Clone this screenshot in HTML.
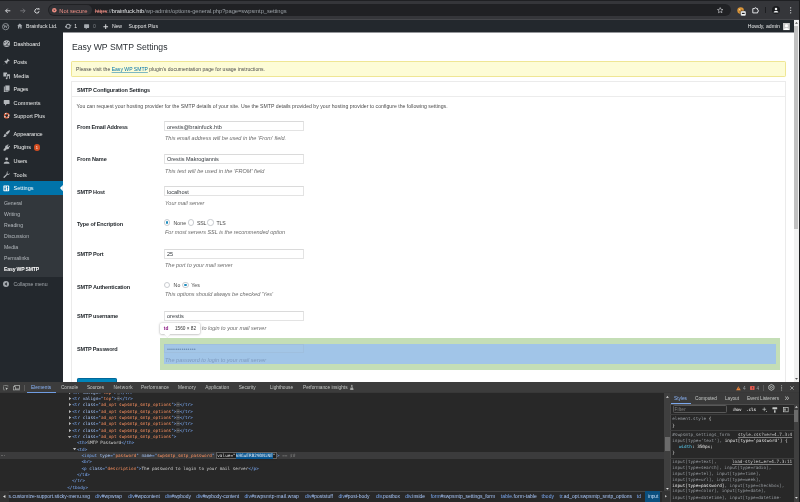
<!DOCTYPE html>
<html lang="en"><head><meta charset="utf-8"><title>Easy WP SMTP Settings</title>
<style>
html,body{margin:0;padding:0;}
body{width:800px;height:502px;overflow:hidden;position:relative;background:#fff;font-family:"Liberation Sans",sans-serif;}
#root{position:absolute;left:0;top:0;width:800px;height:502px;overflow:hidden;will-change:transform;}
.a{position:absolute;}
.t{white-space:pre;line-height:normal;}
.m{font-family:"DejaVu Sans Mono","Liberation Mono",monospace;}
svg{overflow:visible;display:block}
</style></head>
<body>
<div id="root">
<div class="a" style="left:0.00px;top:0.00px;width:800.00px;height:502.00px;background:#ffffff;"></div>
<div class="a" style="left:0.00px;top:0.00px;width:800.00px;height:20.00px;background:#35363a;"></div>
<div class="a" style="left:0.00px;top:0.00px;width:800.00px;height:1.40px;background:#1f2023;"></div>
<div class="a" style="left:0.00px;top:19.20px;width:800.00px;height:0.80px;background:#46474b;"></div>
<svg class="a" style="left:5.20px;top:7.70px;" width="5.6" height="5.6" viewBox="0 0 10 10"><path d="M9.5 5H1.2M4.8 1.2L1 5l3.8 3.8" fill="none" stroke="#e8eaed" stroke-width="1.5"/></svg>
<svg class="a" style="left:19.70px;top:7.70px;" width="5.6" height="5.6" viewBox="0 0 10 10"><path d="M0.5 5H8.8M5.2 1.2L9 5L5.2 8.8" fill="none" stroke="#7d7e82" stroke-width="1.5"/></svg>
<svg class="a" style="left:33.60px;top:7.60px;" width="5.8" height="5.8" viewBox="0 0 10 10"><path d="M8.7 5.4A3.7 3.7 0 1 1 7.2 2.1" fill="none" stroke="#e8eaed" stroke-width="1.5"/><path d="M5.9 0.6H9.3V4Z" fill="#e8eaed"/></svg>
<div class="a" style="left:47.50px;top:3.70px;width:683.00px;height:12.80px;background:#202124;border-radius:6.4px;"></div>
<div class="a" style="left:49.20px;top:5.30px;width:42.80px;height:9.80px;background:#303135;border-radius:4.9px;"></div>
<svg class="a" style="left:51.90px;top:8.00px;" width="4.6" height="4.6" viewBox="0 0 10 10"><circle cx="5" cy="5" r="5" fill="#e98b80"/><path d="M2.6 3.6L5 6.8L7.4 3.6Z" fill="#303135"/></svg>
<div class="a t" style="letter-spacing:0.027px;left:59.20px;top:8px;font-size:5.8px;color:#f08f85;">Not secure</div>
<div class="a t" style="letter-spacing:-0.057px;left:94.80px;top:8px;font-size:5.8px;color:#9aa0a6;"><span style="color:#f08f85;text-decoration:line-through;text-decoration-color:rgba(240,143,133,.5)">https</span><span style="color:#9aa0a6">://</span><span style="color:#e8eaed">brainfuck.htb</span><span style="color:#9aa0a6">/wp-admin/options-general.php?page=swpsmtp_settings</span></div>
<svg class="a" style="left:717.30px;top:6.80px;" width="6.4" height="6.4" viewBox="0 0 10 10"><path d="M5 0.9L6.25 3.7L9.3 4L7 6L7.7 9L5 7.4L2.3 9L3 6L0.7 4L3.75 3.7Z" fill="none" stroke="#d5d7da" stroke-width="0.95" stroke-linejoin="round"/></svg>
<svg class="a" style="left:737.20px;top:6.60px;" width="9.4" height="9.0" viewBox="0 0 9.4 9"><circle cx="3.6" cy="3.6" r="3.3" fill="#d9953a"/><circle cx="2.6" cy="2.6" r="0.7" fill="#f6d9a0"/><circle cx="4.6" cy="3.2" r="0.6" fill="#8a5a1c"/><circle cx="2.8" cy="4.8" r="0.6" fill="#8a5a1c"/><rect x="3.6" y="3.9" width="5.4" height="5" rx="1.1" fill="#f1f3f4" stroke="#35363a" stroke-width="0.5"/><rect x="4.9" y="5.8" width="2.8" height="1.2" fill="#202124"/></svg>
<svg class="a" style="left:751.80px;top:6.90px;" width="7" height="6.6" viewBox="0 0 7 6.6"><path d="M0.8 1.6H2.6A0.9 0.9 0 0 1 4.4 1.6H5.6V3A0.9 0.9 0 0 1 5.6 4.8V5.9H0.8Z" fill="none" stroke="#e8eaed" stroke-width="0.95" stroke-linejoin="round"/></svg>
<div class="a" style="left:765.10px;top:7.40px;width:0.60px;height:5.80px;background:#1d1e21;"></div>
<svg class="a" style="left:772.00px;top:6.00px;" width="8" height="8" viewBox="0 0 8 8"><circle cx="4" cy="4" r="4" fill="#1b1c1f"/><circle cx="4" cy="2.9" r="1.25" fill="#f1f3f4"/><path d="M1.7 6.1C1.7 4.6 6.3 4.6 6.3 6.1V6.5H1.7Z" fill="#f1f3f4"/></svg>
<svg class="a" style="left:789.80px;top:6.70px;" width="1.4" height="6.6" viewBox="0 0 1.4 6.6"><circle cx="0.7" cy="0.8" r="0.62" fill="#e8eaed"/><circle cx="0.7" cy="3.3" r="0.62" fill="#e8eaed"/><circle cx="0.7" cy="5.8" r="0.62" fill="#e8eaed"/></svg>
<div class="a" style="left:0.00px;top:20.00px;width:793.60px;height:12.40px;background:#23282d;"></div>
<svg class="a" style="left:2.20px;top:22.50px;" width="7.3" height="7.3" viewBox="0 0 10 10"><circle cx="5" cy="5" r="4.3" fill="none" stroke="#a6abb0" stroke-width="1"/><text x="5" y="7.3" font-size="6.4" font-weight="700" text-anchor="middle" fill="#a6abb0" font-family="Liberation Serif,serif">W</text></svg>
<svg class="a" style="left:16.90px;top:23.40px;" width="5.6" height="5.8" viewBox="0 0 10 10"><path d="M5 0.5L9.6 4.6H8.3V9.5H5.9V6.3H4.1V9.5H1.7V4.6H0.4Z" fill="#a6abb0"/></svg>
<div class="a t" style="letter-spacing:0.004px;left:26.00px;top:23px;font-size:5.15px;color:#e6e7e8;">Brainfuck Ltd.</div>
<svg class="a" style="left:64.50px;top:23.20px;" width="6.4" height="6.4" viewBox="0 0 10 10"><circle cx="5" cy="5" r="3.2" fill="none" stroke="#a6abb0" stroke-width="1.6"/><path d="M9.8 2.2V5.2H6.8Z" fill="#a6abb0"/><path d="M0.2 7.8V4.8H3.2Z" fill="#a6abb0"/><path d="M7.2 5.4L9.6 5.4L9.6 6.2Z" fill="#23282d"/><path d="M2.8 4.6L0.4 4.6L0.4 3.8Z" fill="#23282d"/></svg>
<div class="a t" style="left:74.20px;top:23px;font-size:5.15px;color:#e6e7e8;">1</div>
<svg class="a" style="left:83.50px;top:23.70px;" width="5.2" height="5.9" viewBox="0 0 10 11"><path d="M1.2 0.5H8.8A1 1 0 0 1 9.8 1.5V6.5A1 1 0 0 1 8.8 7.5H6L3.4 10.5V7.5H1.2A1 1 0 0 1 0.2 6.5V1.5A1 1 0 0 1 1.2 0.5Z" fill="#a6abb0"/></svg>
<div class="a t" style="left:93.00px;top:23px;font-size:5.15px;color:#7c8186;">0</div>
<svg class="a" style="left:103.30px;top:23.60px;" width="5.4" height="5.4" viewBox="0 0 10 10"><path d="M5 0.6V9.4M0.6 5H9.4" stroke="#d6d8da" stroke-width="1.9" fill="none"/></svg>
<div class="a t" style="letter-spacing:-0.099px;left:112.00px;top:23px;font-size:5.15px;color:#e6e7e8;">New</div>
<div class="a t" style="letter-spacing:0.005px;left:128.50px;top:23px;font-size:5.15px;color:#e6e7e8;">Support Plus</div>
<div class="a t" style="letter-spacing:0.008px;left:747.70px;top:23px;font-size:5.15px;color:#e6e7e8;">Howdy, admin</div>
<svg class="a" style="left:783.10px;top:22.60px;" width="6.9" height="7.1" viewBox="0 0 6.9 7.1"><rect width="6.9" height="7.1" fill="#c9c9c9"/><circle cx="3.45" cy="2.7" r="1.5" fill="#fff"/><path d="M0.8 7.1C0.8 4.2 6.1 4.2 6.1 7.1Z" fill="#fff"/></svg>
<div class="a" style="left:0.00px;top:32.40px;width:63.00px;height:350.00px;background:#23282d;"></div>
<div class="a" style="left:63.00px;top:32.00px;width:730.60px;height:1.00px;background:#94969a;"></div>
<svg class="a" style="left:2.55px;top:40.45px;" width="7.3" height="7.3" viewBox="0 0 10 10"><circle cx="5" cy="5" r="4.5" fill="#b3b7bb"/><circle cx="5" cy="2.3" r="0.7" fill="#23282d"/><circle cx="2.5" cy="3.6" r="0.7" fill="#23282d"/><circle cx="7.5" cy="3.6" r="0.7" fill="#23282d"/><path d="M4.2 6.9L6.7 3.6L5.9 7.4Z" fill="#23282d"/><path d="M1.2 7.6H8.8" stroke="#23282d" stroke-width="0.6"/></svg>
<div class="a t" style="letter-spacing:-0.071px;left:13.60px;top:41px;font-size:5.55px;color:#ebecec;">Dashboard</div>
<svg class="a" style="left:2.55px;top:58.45px;" width="7.3" height="7.3" viewBox="0 0 10 10"><path d="M6 0.6L9.4 4L8.3 4.5L7.6 4.2L6 5.8C6.3 6.8 6 7.7 5.4 8.3L3.6 6.5L0.9 9.4L0.6 9.1L3.5 6.4L1.7 4.6C2.3 4 3.2 3.7 4.2 4L5.8 2.4L5.5 1.7Z" fill="#b3b7bb"/></svg>
<div class="a t" style="letter-spacing:-0.095px;left:13.60px;top:59px;font-size:5.55px;color:#ebecec;">Posts</div>
<svg class="a" style="left:2.55px;top:71.95px;" width="7.3" height="7.3" viewBox="0 0 10 10"><path d="M0.5 0.8H5.6V2.6H4.2V6.2H0.5Z" fill="#b3b7bb"/><path d="M5 3.2H9.5V9.2H8.3V5.4L6.2 5.9V8.7A1.2 1.1 0 1 1 5 7.7Z" fill="#b3b7bb"/></svg>
<div class="a t" style="letter-spacing:0.018px;left:13.60px;top:73px;font-size:5.55px;color:#ebecec;">Media</div>
<svg class="a" style="left:2.55px;top:85.45px;" width="7.3" height="7.3" viewBox="0 0 10 10"><path d="M3.2 0.6H9V7.8H3.2Z" fill="#b3b7bb"/><path d="M1.2 2.2H2.5V8.5H7.4V9.6H1.2Z" fill="#b3b7bb"/></svg>
<div class="a t" style="letter-spacing:-0.247px;left:13.60px;top:86px;font-size:5.55px;color:#ebecec;">Pages</div>
<svg class="a" style="left:2.55px;top:99.05px;" width="7.3" height="7.3" viewBox="0 0 10 10"><path d="M2 1.2H8A1 1 0 0 1 9 2.2V6A1 1 0 0 1 8 7H5.2L2.8 9.4V7H2A1 1 0 0 1 1 6V2.2A1 1 0 0 1 2 1.2Z" fill="#b3b7bb"/></svg>
<div class="a t" style="letter-spacing:0.034px;left:13.60px;top:100px;font-size:5.55px;color:#ebecec;">Comments</div>
<svg class="a" style="left:2.55px;top:112.35px;" width="7.3" height="7.3" viewBox="0 0 10 10"><circle cx="5" cy="5" r="2.9" fill="none" stroke="#dc5f38" stroke-width="1.9"/><circle cx="5" cy="5" r="2.9" fill="none" stroke="#ececec" stroke-width="1.9" stroke-dasharray="1.5 3.055" transform="rotate(29 5 5)"/></svg>
<div class="a t" style="letter-spacing:-0.030px;left:13.60px;top:113px;font-size:5.55px;color:#ebecec;">Support Plus</div>
<svg class="a" style="left:2.55px;top:130.25px;" width="7.3" height="7.3" viewBox="0 0 10 10"><path d="M9.7 0.5C7.6 0.7 4.8 2.6 3.5 4.6L5.5 6.6C7.5 5.2 9.4 2.6 9.7 0.5Z" fill="#b3b7bb"/><path d="M2.9 5.2L4.9 7.2C4.8 8.8 3 9.8 0.3 9.6C1.6 8.4 1.2 6 2.9 5.2Z" fill="#b3b7bb"/></svg>
<div class="a t" style="letter-spacing:-0.092px;left:13.60px;top:131px;font-size:5.55px;color:#ebecec;">Appearance</div>
<svg class="a" style="left:2.55px;top:143.85px;" width="7.3" height="7.3" viewBox="0 0 10 10"><path d="M6.9 0.5L7.7 1.3L6 3L7.2 4.2L8.9 2.5L9.7 3.3L8 5L8.6 5.6C7.6 7.2 6.4 7.6 5 7.2L3 9.4H0.8V7.2L3 5.2C2.6 3.8 3 2.6 4.6 1.6L5.2 2.2Z" fill="#b3b7bb"/></svg>
<div class="a t" style="letter-spacing:-0.115px;left:13.60px;top:144px;font-size:5.55px;color:#ebecec;">Plugins</div>
<svg class="a" style="left:2.55px;top:157.35px;" width="7.3" height="7.3" viewBox="0 0 10 10"><circle cx="5" cy="2.6" r="2" fill="#b3b7bb"/><path d="M1 9.2C1 5 9 5 9 9.2Z" fill="#b3b7bb"/></svg>
<div class="a t" style="letter-spacing:-0.180px;left:13.60px;top:158px;font-size:5.55px;color:#ebecec;">Users</div>
<svg class="a" style="left:2.55px;top:170.95px;" width="7.3" height="7.3" viewBox="0 0 10 10"><path d="M9.5 2.6A2.6 2.6 0 0 1 6 5L2.2 9.2A1 1 0 0 1 0.8 7.8L5 4A2.6 2.6 0 0 1 7.4 0.5L5.9 2L6.4 3.6L8 4.1Z" fill="#b3b7bb"/></svg>
<div class="a t" style="letter-spacing:0.069px;left:13.60px;top:172px;font-size:5.55px;color:#ebecec;">Tools</div>
<div class="a" style="left:33.60px;top:144.30px;width:6.40px;height:6.40px;background:#d54e21;border-radius:3.2px;"></div>
<div class="a t" style="left:35.75px;top:145px;font-size:4.0px;color:#fff;">1</div>
<div class="a" style="left:0.00px;top:181.20px;width:63.00px;height:13.50px;background:#0073aa;"></div>
<svg class="a" style="left:2.90px;top:184.60px;" width="6.6" height="6.6" viewBox="0 0 10 10"><rect x="0.6" y="0.6" width="8.8" height="8.8" rx="1" fill="#fff"/><path d="M3.2 1.6V8.4M6.8 1.6V8.4" stroke="#0073aa" stroke-width="1.1"/><rect x="2.2" y="5" width="2" height="1.8" fill="#0073aa"/><rect x="5.8" y="2.8" width="2" height="1.8" fill="#0073aa"/></svg>
<div class="a t" style="letter-spacing:-0.018px;left:13.60px;top:185px;font-size:5.55px;color:#fff;">Settings</div>
<svg class="a" style="left:60.10px;top:184.90px;" width="2.9" height="6.2" viewBox="0 0 2.9 6.2"><path d="M2.9 0V6.2L0 3.1Z" fill="#fff"/></svg>
<div class="a" style="left:0.00px;top:194.70px;width:63.00px;height:82.70px;background:#32373c;"></div>
<div class="a t" style="letter-spacing:-0.057px;left:4.10px;top:200px;font-size:5.15px;color:#b4b9be;">General</div>
<div class="a t" style="letter-spacing:0.013px;left:4.10px;top:211px;font-size:5.15px;color:#b4b9be;">Writing</div>
<div class="a t" style="letter-spacing:-0.037px;left:4.10px;top:222px;font-size:5.15px;color:#b4b9be;">Reading</div>
<div class="a t" style="letter-spacing:0.004px;left:4.10px;top:233px;font-size:5.15px;color:#b4b9be;">Discussion</div>
<div class="a t" style="letter-spacing:-0.023px;left:4.10px;top:244px;font-size:5.15px;color:#b4b9be;">Media</div>
<div class="a t" style="letter-spacing:-0.014px;left:4.10px;top:255px;font-size:5.15px;color:#b4b9be;">Permalinks</div>
<div class="a t" style="letter-spacing:-0.204px;left:4.10px;top:266px;font-size:5.15px;color:#fff;font-weight:700;">Easy WP SMTP</div>
<svg class="a" style="left:3.20px;top:281.20px;" width="6" height="6" viewBox="0 0 10 10"><circle cx="5" cy="5" r="5" fill="#a3a8ad"/><path d="M6.4 2.2V7.8L2.6 5Z" fill="#23282d"/></svg>
<div class="a t" style="letter-spacing:-0.031px;left:13.60px;top:281px;font-size:5.15px;color:#a3a8ad;">Collapse menu</div>
<div class="a t" style="transform:scaleX(0.9031);transform-origin:0 0;left:71.60px;top:41px;font-size:9.6px;color:#2b3035;">Easy WP SMTP Settings</div>
<div class="a" style="left:71.00px;top:61.25px;width:715.00px;height:15.30px;background:#fdfcd6;border:0.5px solid #efe694;border-radius:1.2px;box-sizing:border-box;"></div>
<div class="a t" style="letter-spacing:0.017px;left:76.00px;top:66px;font-size:5.05px;color:#4a4a4a;">Please visit the <span style="color:#0073aa;text-decoration:underline;text-decoration-color:rgba(0,115,170,.5);text-underline-offset:0.5px">Easy WP SMTP</span> plugin's documentation page for usage instructions.</div>
<div class="a" style="left:71.20px;top:81.20px;width:714.40px;height:320.00px;background:#ffffff;border:1px solid #ebebeb;box-sizing:border-box;"></div>
<div class="a t" style="letter-spacing:-0.131px;left:76.90px;top:87px;font-size:5.55px;color:#23282d;font-weight:700;">SMTP Configuration Settings</div>
<div class="a" style="left:71.50px;top:96.10px;width:713.80px;height:0.45px;background:#ececec;"></div>
<div class="a t" style="letter-spacing:0.008px;left:76.60px;top:103px;font-size:5.15px;color:#4a4a4a;">You can request your hosting provider for the SMTP details of your site. Use the SMTP details provided by your hosting provider to configure the following settings.</div>
<div class="a t" style="letter-spacing:-0.167px;left:77.00px;top:124px;font-size:5.55px;color:#23282d;font-weight:700;">From Email Address</div>
<div class="a t" style="letter-spacing:-0.092px;left:77.00px;top:156px;font-size:5.55px;color:#23282d;font-weight:700;">From Name</div>
<div class="a t" style="letter-spacing:-0.160px;left:77.00px;top:189px;font-size:5.55px;color:#23282d;font-weight:700;">SMTP Host</div>
<div class="a t" style="letter-spacing:-0.132px;left:77.00px;top:221px;font-size:5.55px;color:#23282d;font-weight:700;">Type of Encription</div>
<div class="a t" style="letter-spacing:-0.161px;left:77.00px;top:251px;font-size:5.55px;color:#23282d;font-weight:700;">SMTP Port</div>
<div class="a t" style="letter-spacing:-0.130px;left:77.00px;top:284px;font-size:5.55px;color:#23282d;font-weight:700;">SMTP Authentication</div>
<div class="a t" style="letter-spacing:-0.166px;left:77.00px;top:313px;font-size:5.55px;color:#23282d;font-weight:700;">SMTP username</div>
<div class="a t" style="letter-spacing:-0.197px;left:77.00px;top:346px;font-size:5.55px;color:#23282d;font-weight:700;">SMTP Password</div>
<div class="a" style="left:164.00px;top:121.25px;width:139.70px;height:9.70px;background:#fff;border:1px solid #e3e3e3;border-top-color:#dadada;box-sizing:border-box;"></div>
<div class="a t" style="letter-spacing:0.060px;left:166.90px;top:124px;font-size:5.55px;color:#32373c;">orestis@brainfuck.htb</div>
<div class="a" style="left:164.00px;top:154.00px;width:139.70px;height:9.70px;background:#fff;border:1px solid #e3e3e3;border-top-color:#dadada;box-sizing:border-box;"></div>
<div class="a t" style="letter-spacing:-0.005px;left:166.90px;top:156px;font-size:5.55px;color:#32373c;">Orestis Makrogiannis</div>
<div class="a" style="left:164.00px;top:186.40px;width:139.70px;height:9.70px;background:#fff;border:1px solid #e3e3e3;border-top-color:#dadada;box-sizing:border-box;"></div>
<div class="a t" style="letter-spacing:0.010px;left:166.90px;top:189px;font-size:5.55px;color:#32373c;">localhost</div>
<div class="a" style="left:164.00px;top:249.00px;width:139.70px;height:9.70px;background:#fff;border:1px solid #e3e3e3;border-top-color:#dadada;box-sizing:border-box;"></div>
<div class="a t" style="letter-spacing:-0.086px;left:166.90px;top:251px;font-size:5.55px;color:#32373c;">25</div>
<div class="a" style="left:164.00px;top:311.00px;width:139.70px;height:9.70px;background:#fff;border:1px solid #e3e3e3;border-top-color:#dadada;box-sizing:border-box;"></div>
<div class="a t" style="letter-spacing:0.094px;left:166.90px;top:313px;font-size:5.55px;color:#32373c;">orestis</div>
<div class="a t" style="letter-spacing:-0.000px;left:165.00px;top:135px;font-size:5.5px;color:#6a6a6a;font-style:italic;">This email address will be used in the 'From' field.</div>
<div class="a t" style="letter-spacing:0.046px;left:165.00px;top:168px;font-size:5.5px;color:#6a6a6a;font-style:italic;">This text will be used in the 'FROM' field</div>
<div class="a t" style="letter-spacing:-0.022px;left:165.00px;top:200px;font-size:5.5px;color:#6a6a6a;font-style:italic;">Your mail server</div>
<div class="a t" style="letter-spacing:-0.021px;left:165.00px;top:229px;font-size:5.5px;color:#6a6a6a;font-style:italic;">For most servers SSL is the recommended option</div>
<div class="a t" style="letter-spacing:0.009px;left:165.00px;top:262px;font-size:5.5px;color:#6a6a6a;font-style:italic;">The port to your mail server</div>
<div class="a t" style="letter-spacing:-0.005px;left:165.00px;top:291px;font-size:5.5px;color:#6a6a6a;font-style:italic;">This options should always be checked 'Yes'</div>
<div class="a t" style="letter-spacing:-0.007px;left:165.00px;top:325px;font-size:5.5px;color:#6a6a6a;font-style:italic;">The username to login to your mail server</div>
<div class="a" style="left:164.10px;top:219.45px;width:6.30px;height:6.30px;background:#fff;border:1px solid #c9ccd0;border-radius:50%;box-sizing:border-box;"></div>
<div class="a" style="left:166.05px;top:221.40px;width:2.40px;height:2.40px;background:#1e8cbe;border-radius:50%;"></div>
<div class="a" style="left:188.10px;top:219.45px;width:6.30px;height:6.30px;background:#fff;border:1px solid #c9ccd0;border-radius:50%;box-sizing:border-box;"></div>
<div class="a" style="left:207.45px;top:219.45px;width:6.30px;height:6.30px;background:#fff;border:1px solid #c9ccd0;border-radius:50%;box-sizing:border-box;"></div>
<div class="a t" style="letter-spacing:0.113px;left:173.50px;top:220px;font-size:5.15px;color:#444;">None</div>
<div class="a t" style="letter-spacing:-0.273px;left:197.10px;top:220px;font-size:5.15px;color:#444;">SSL</div>
<div class="a t" style="letter-spacing:-0.113px;left:216.50px;top:220px;font-size:5.15px;color:#444;">TLS</div>
<div class="a" style="left:164.10px;top:281.85px;width:6.30px;height:6.30px;background:#fff;border:1px solid #c9ccd0;border-radius:50%;box-sizing:border-box;"></div>
<div class="a" style="left:182.25px;top:281.85px;width:6.30px;height:6.30px;background:#fff;border:1px solid #c9ccd0;border-radius:50%;box-sizing:border-box;"></div>
<div class="a" style="left:184.20px;top:283.80px;width:2.40px;height:2.40px;background:#1e8cbe;border-radius:50%;"></div>
<div class="a t" style="letter-spacing:0.261px;left:173.50px;top:282px;font-size:5.15px;color:#444;">No</div>
<div class="a t" style="letter-spacing:0.036px;left:191.25px;top:282px;font-size:5.15px;color:#444;">Yes</div>
<div class="a" style="left:160.00px;top:337.50px;width:620.00px;height:32.30px;background:#c4deb6;"></div>
<div class="a" style="left:164.00px;top:343.50px;width:612.00px;height:20.20px;background:#a1c5e8;"></div>
<div class="a" style="left:164.00px;top:343.50px;width:139.70px;height:9.40px;background:#a3c6e7;border:0.5px solid #9fbfde;box-sizing:border-box;"></div>
<div class="a t" style="letter-spacing:0.113px;left:166.90px;top:346px;font-size:5.6px;color:#6e8eb4;">••••••••••••••</div>
<div class="a t" style="letter-spacing:0.015px;left:165.00px;top:357px;font-size:5.5px;color:#7e9bbf;font-style:italic;">The password to login to your mail server</div>
<div class="a" style="left:160.00px;top:323.25px;width:39.75px;height:10.90px;background:#fff;border-radius:1.6px;box-shadow:0 0.3px 2.2px rgba(0,0,0,.42);"></div>
<svg class="a" style="left:164.30px;top:333.80px;filter:drop-shadow(0 0.5px 0.5px rgba(0,0,0,.22));" width="6.4" height="3.8" viewBox="0 0 6.4 3.8"><path d="M0 0H6.4L3.2 3.7Z" fill="#fff"/></svg>
<div class="a" style="left:163.00px;top:331.00px;width:10.00px;height:3.10px;background:#fff;"></div>
<div class="a t" style="letter-spacing:0.258px;left:163.75px;top:326px;font-size:4.75px;color:#881280;font-weight:700;">td</div>
<div class="a t" style="letter-spacing:-0.030px;left:175.00px;top:326px;font-size:4.75px;color:#333;">1560 × 82</div>
<div class="a" style="left:76.90px;top:377.90px;width:40.20px;height:10.00px;background:#0085ba;border-radius:1.2px;border:0.4px solid #006799;box-sizing:border-box;"></div>
<div class="a t" style="left:81.00px;top:381px;font-size:5.15px;color:#fff;">Save Changes</div>
<div class="a" style="left:793.60px;top:20.00px;width:5.00px;height:362.20px;background:#f1f1f1;"></div>
<div class="a" style="left:794.10px;top:26.00px;width:4.10px;height:202.70px;background:#c1c1c1;"></div>
<svg class="a" style="left:794.60px;top:21.80px;" width="3" height="1.8" viewBox="0 0 3 1.8"><path d="M0 1.8L1.5 0L3 1.8Z" fill="#505050"/></svg>
<svg class="a" style="left:794.60px;top:378.00px;" width="3" height="1.8" viewBox="0 0 3 1.8"><path d="M0 0L1.5 1.8L3 0Z" fill="#505050"/></svg>
<div class="a" style="left:0.00px;top:382.20px;width:800.00px;height:119.80px;background:#282828;"></div>
<div class="a" style="left:0.00px;top:452.10px;width:670.20px;height:6.60px;background:#3b3b3c;"></div>
<div class="a t" style="left:0.40px;top:452px;font-size:4.6px;color:#dcdcdc;">…</div>
<div class="a t m" style="left:72.20px;top:390px;font-size:4.33px;color:#d0d0d0;"><span style="color:#7cacf8">&lt;tr</span> <span style="color:#a8c7fa">valign</span><span style="color:#7cacf8">="</span><span style="color:#fb915f">top</span><span style="color:#7cacf8">"</span><span style="color:#7cacf8">&gt;</span><span style="color:#c8c8c8;background:#454648;border-radius:1.6px;font-size:3.8px;padding:0 0.5px;">&#8943;</span><span style="color:#7cacf8">&lt;/tr&gt;</span></div>
<svg class="a" style="left:69.10px;top:390.67px;" width="2.2" height="3.2" viewBox="0 0 2.2 3.2"><path d="M0 0L2.2 1.6L0 3.2Z" fill="#bdbdbd"/></svg>
<svg class="a" style="left:69.10px;top:397.00px;" width="2.2" height="3.2" viewBox="0 0 2.2 3.2"><path d="M0 0L2.2 1.6L0 3.2Z" fill="#bdbdbd"/></svg>
<div class="a t m" style="left:72.20px;top:396px;font-size:4.33px;color:#d0d0d0;"><span style="color:#7cacf8">&lt;tr</span> <span style="color:#a8c7fa">valign</span><span style="color:#7cacf8">="</span><span style="color:#fb915f">top</span><span style="color:#7cacf8">"</span><span style="color:#7cacf8">&gt;</span><span style="color:#c8c8c8;background:#454648;border-radius:1.6px;font-size:3.8px;padding:0 0.5px;">&#8943;</span><span style="color:#7cacf8">&lt;/tr&gt;</span></div>
<svg class="a" style="left:69.10px;top:403.33px;" width="2.2" height="3.2" viewBox="0 0 2.2 3.2"><path d="M0 0L2.2 1.6L0 3.2Z" fill="#bdbdbd"/></svg>
<div class="a t m" style="left:72.20px;top:402px;font-size:4.33px;color:#d0d0d0;"><span style="color:#7cacf8">&lt;tr</span> <span style="color:#a8c7fa">class</span><span style="color:#7cacf8">="</span><span style="color:#fb915f">ad_opt swpsmtp_smtp_options</span><span style="color:#7cacf8">"</span><span style="color:#7cacf8">&gt;</span><span style="color:#c8c8c8;background:#454648;border-radius:1.6px;font-size:3.8px;padding:0 0.5px;">&#8943;</span><span style="color:#7cacf8">&lt;/tr&gt;</span></div>
<svg class="a" style="left:69.10px;top:409.66px;" width="2.2" height="3.2" viewBox="0 0 2.2 3.2"><path d="M0 0L2.2 1.6L0 3.2Z" fill="#bdbdbd"/></svg>
<div class="a t m" style="left:72.20px;top:409px;font-size:4.33px;color:#d0d0d0;"><span style="color:#7cacf8">&lt;tr</span> <span style="color:#a8c7fa">class</span><span style="color:#7cacf8">="</span><span style="color:#fb915f">ad_opt swpsmtp_smtp_options</span><span style="color:#7cacf8">"</span><span style="color:#7cacf8">&gt;</span><span style="color:#c8c8c8;background:#454648;border-radius:1.6px;font-size:3.8px;padding:0 0.5px;">&#8943;</span><span style="color:#7cacf8">&lt;/tr&gt;</span></div>
<svg class="a" style="left:69.10px;top:415.99px;" width="2.2" height="3.2" viewBox="0 0 2.2 3.2"><path d="M0 0L2.2 1.6L0 3.2Z" fill="#bdbdbd"/></svg>
<div class="a t m" style="left:72.20px;top:415px;font-size:4.33px;color:#d0d0d0;"><span style="color:#7cacf8">&lt;tr</span> <span style="color:#a8c7fa">class</span><span style="color:#7cacf8">="</span><span style="color:#fb915f">ad_opt swpsmtp_smtp_options</span><span style="color:#7cacf8">"</span><span style="color:#7cacf8">&gt;</span><span style="color:#c8c8c8;background:#454648;border-radius:1.6px;font-size:3.8px;padding:0 0.5px;">&#8943;</span><span style="color:#7cacf8">&lt;/tr&gt;</span></div>
<svg class="a" style="left:69.10px;top:422.32px;" width="2.2" height="3.2" viewBox="0 0 2.2 3.2"><path d="M0 0L2.2 1.6L0 3.2Z" fill="#bdbdbd"/></svg>
<div class="a t m" style="left:72.20px;top:421px;font-size:4.33px;color:#d0d0d0;"><span style="color:#7cacf8">&lt;tr</span> <span style="color:#a8c7fa">class</span><span style="color:#7cacf8">="</span><span style="color:#fb915f">ad_opt swpsmtp_smtp_options</span><span style="color:#7cacf8">"</span><span style="color:#7cacf8">&gt;</span><span style="color:#c8c8c8;background:#454648;border-radius:1.6px;font-size:3.8px;padding:0 0.5px;">&#8943;</span><span style="color:#7cacf8">&lt;/tr&gt;</span></div>
<svg class="a" style="left:69.10px;top:428.65px;" width="2.2" height="3.2" viewBox="0 0 2.2 3.2"><path d="M0 0L2.2 1.6L0 3.2Z" fill="#bdbdbd"/></svg>
<div class="a t m" style="left:72.20px;top:428px;font-size:4.33px;color:#d0d0d0;"><span style="color:#7cacf8">&lt;tr</span> <span style="color:#a8c7fa">class</span><span style="color:#7cacf8">="</span><span style="color:#fb915f">ad_opt swpsmtp_smtp_options</span><span style="color:#7cacf8">"</span><span style="color:#7cacf8">&gt;</span><span style="color:#c8c8c8;background:#454648;border-radius:1.6px;font-size:3.8px;padding:0 0.5px;">&#8943;</span><span style="color:#7cacf8">&lt;/tr&gt;</span></div>
<svg class="a" style="left:68.20px;top:435.58px;" width="3.2" height="2.2" viewBox="0 0 3.2 2.2"><path d="M0 0H3.2L1.6 2.2Z" fill="#bdbdbd"/></svg>
<div class="a t m" style="left:72.20px;top:434px;font-size:4.33px;color:#d0d0d0;"><span style="color:#7cacf8">&lt;tr</span> <span style="color:#a8c7fa">class</span><span style="color:#7cacf8">="</span><span style="color:#fb915f">ad_opt swpsmtp_smtp_options</span><span style="color:#7cacf8">"</span><span style="color:#7cacf8">&gt;</span></div>
<div class="a t m" style="left:76.90px;top:440px;font-size:4.33px;color:#d0d0d0;"><span style="color:#7cacf8">&lt;th&gt;</span>SMTP Password<span style="color:#7cacf8">&lt;/th&gt;</span></div>
<svg class="a" style="left:72.90px;top:448.24px;" width="3.2" height="2.2" viewBox="0 0 3.2 2.2"><path d="M0 0H3.2L1.6 2.2Z" fill="#bdbdbd"/></svg>
<div class="a t m" style="left:76.90px;top:447px;font-size:4.33px;color:#d0d0d0;"><span style="color:#7cacf8">&lt;td&gt;</span></div>
<div class="a t m" style="left:81.50px;top:453px;font-size:4.33px;color:#d0d0d0;"><span style="color:#7cacf8">&lt;input</span> <span style="color:#a8c7fa">type</span><span style="color:#7cacf8">="</span><span style="color:#fb915f">password</span><span style="color:#7cacf8">"</span> <span style="color:#a8c7fa">name</span><span style="color:#7cacf8">="</span><span style="color:#fb915f">swpsmtp_smtp_password</span><span style="color:#7cacf8">"</span></div>
<div class="a" style="left:216.00px;top:451.90px;width:60.50px;height:7.50px;background:#1f1f1f;border:1px solid #626262;box-sizing:border-box;box-shadow:0 0.4px 1.2px rgba(0,0,0,.6);"></div>
<div class="a" style="left:236.10px;top:452.50px;width:36.70px;height:6.20px;background:#0a5792;"></div>
<div class="a t m" style="letter-spacing:0.043px;left:217.20px;top:453px;font-size:4.33px;color:#e0e0e0;">value="<span style="color:#e4ecf5">kHGuERB29DNiNE</span>"</div>
<div class="a t m" style="left:277.00px;top:453px;font-size:4.33px;color:#d0d0d0;"><span style="color:#7cacf8">&gt;</span><span style="color:#7d7d7d"> == </span><span style="color:#7d7d7d;font-style:italic">$0</span></div>
<div class="a t m" style="left:81.50px;top:459px;font-size:4.33px;color:#d0d0d0;"><span style="color:#7cacf8">&lt;br&gt;</span></div>
<div class="a t m" style="left:81.50px;top:466px;font-size:4.33px;color:#d0d0d0;"><span style="color:#7cacf8">&lt;p</span> <span style="color:#a8c7fa">class</span><span style="color:#7cacf8">="</span><span style="color:#fb915f">description</span><span style="color:#7cacf8">"</span><span style="color:#7cacf8">&gt;</span>The password to login to your mail server<span style="color:#7cacf8">&lt;/p&gt;</span></div>
<div class="a t m" style="left:76.90px;top:472px;font-size:4.33px;color:#d0d0d0;"><span style="color:#7cacf8">&lt;/td&gt;</span></div>
<div class="a t m" style="left:72.00px;top:478px;font-size:4.33px;color:#d0d0d0;"><span style="color:#7cacf8">&lt;/tr&gt;</span></div>
<div class="a t m" style="left:67.20px;top:485px;font-size:4.33px;color:#d0d0d0;"><span style="color:#7cacf8">&lt;/tbody&gt;</span></div>
<div class="a" style="left:0.00px;top:382.20px;width:800.00px;height:10.00px;background:#3c3c3c;"></div>
<div class="a" style="left:0.00px;top:392.00px;width:800.00px;height:1.00px;background:#383838;"></div>
<svg class="a" style="left:3.40px;top:384.90px;" width="5.4" height="5.4" viewBox="0 0 10 10"><path d="M4 9H1V1H9V4" fill="none" stroke="#c4c7c5" stroke-width="1.2" stroke-dasharray="1.4 0.9"/><path d="M4.6 4.6L9.6 6.4L7.4 7.4L6.4 9.6Z" fill="#c4c7c5"/></svg>
<svg class="a" style="left:13.00px;top:384.90px;" width="7.2" height="5.4" viewBox="0 0 13 10"><rect x="3" y="1" width="8.6" height="6.4" fill="none" stroke="#c4c7c5" stroke-width="1.2"/><rect x="0.6" y="3.2" width="3.6" height="6" fill="#3c3c3c" stroke="#c4c7c5" stroke-width="1.1"/><path d="M5 9H12.6" stroke="#c4c7c5" stroke-width="1.2"/></svg>
<div class="a" style="left:24.40px;top:384.60px;width:0.45px;height:6.00px;background:#5a5a5a;"></div>
<div class="a t" style="letter-spacing:0.055px;left:31.00px;top:385px;font-size:4.75px;color:#8ab4f8;">Elements</div>
<div class="a t" style="letter-spacing:-0.062px;left:61.00px;top:385px;font-size:4.75px;color:#c4c7c5;">Console</div>
<div class="a t" style="letter-spacing:-0.062px;left:87.00px;top:385px;font-size:4.75px;color:#c4c7c5;">Sources</div>
<div class="a t" style="letter-spacing:0.311px;left:113.40px;top:385px;font-size:4.75px;color:#c4c7c5;">Network</div>
<div class="a t" style="letter-spacing:0.072px;left:141.00px;top:385px;font-size:4.75px;color:#c4c7c5;">Performance</div>
<div class="a t" style="letter-spacing:0.157px;left:177.90px;top:385px;font-size:4.75px;color:#c4c7c5;">Memory</div>
<div class="a t" style="letter-spacing:0.077px;left:205.20px;top:385px;font-size:4.75px;color:#c4c7c5;">Application</div>
<div class="a t" style="letter-spacing:-0.053px;left:238.75px;top:385px;font-size:4.75px;color:#c4c7c5;">Security</div>
<div class="a t" style="letter-spacing:-0.025px;left:270.00px;top:385px;font-size:4.75px;color:#c4c7c5;">Lighthouse</div>
<div class="a t" style="letter-spacing:-0.006px;left:303.00px;top:385px;font-size:4.75px;color:#c4c7c5;">Performance insights</div>
<div class="a" style="left:26.90px;top:392.00px;width:29.00px;height:1.00px;background:#6f9ce2;"></div>
<svg class="a" style="left:350.20px;top:385.20px;" width="3.6" height="4.8" viewBox="0 0 6 8"><path d="M2 0.5H4M2.4 0.5V3L0.6 7.4H5.4L3.6 3V0.5" fill="none" stroke="#c4c7c5" stroke-width="0.9"/><path d="M1.4 5.4H4.6L5.4 7.4H0.6Z" fill="#c4c7c5"/></svg>
<svg class="a" style="left:736.20px;top:385.70px;" width="4.8" height="4.4" viewBox="0 0 10 9"><path d="M5 0.3L9.8 8.8H0.2Z" fill="#f0873a"/><path d="M5 3V6" stroke="#3c3c3c" stroke-width="1"/></svg>
<div class="a t" style="left:742.90px;top:386px;font-size:4.75px;color:#9aa0a6;">4</div>
<svg class="a" style="left:750.00px;top:386.00px;" width="4.6" height="3.9" viewBox="0 0 4.6 3.9"><rect width="4.6" height="3.9" rx="0.6" fill="#e0584f"/><rect x="2" y="0.8" width="0.7" height="1.5" fill="#3c3c3c"/><rect x="2" y="2.7" width="0.7" height="0.6" fill="#3c3c3c"/></svg>
<div class="a t" style="left:756.40px;top:386px;font-size:4.75px;color:#9aa0a6;">4</div>
<div class="a" style="left:763.40px;top:384.60px;width:0.45px;height:6.00px;background:#5a5a5a;"></div>
<svg class="a" style="left:767.60px;top:384.10px;" width="6.8" height="6.8" viewBox="0 0 10 10"><path d="M5 0.6L8.8 2.8V7.2L5 9.4L1.2 7.2V2.8Z" fill="none" stroke="#c4c7c5" stroke-width="1.2"/><circle cx="5" cy="5" r="1.5" fill="none" stroke="#c4c7c5" stroke-width="1.1"/></svg>
<svg class="a" style="left:781.00px;top:384.70px;" width="1.2" height="5.8" viewBox="0 0 1.2 5.8"><circle cx="0.6" cy="0.7" r="0.55" fill="#c4c7c5"/><circle cx="0.6" cy="2.9" r="0.55" fill="#c4c7c5"/><circle cx="0.6" cy="5.1" r="0.55" fill="#c4c7c5"/></svg>
<svg class="a" style="left:790.00px;top:385.60px;" width="4" height="4" viewBox="0 0 10 10"><path d="M0.8 0.8L9.2 9.2M9.2 0.8L0.8 9.2" stroke="#c4c7c5" stroke-width="1.7"/></svg>
<div class="a" style="left:664.40px;top:392.90px;width:5.80px;height:98.10px;background:#3f3f3f;"></div>
<div class="a" style="left:664.90px;top:437.00px;width:4.80px;height:14.20px;background:#6b6b6b;"></div>
<svg class="a" style="left:665.90px;top:395.60px;" width="2.8" height="1.7" viewBox="0 0 3 1.8"><path d="M0 1.8L1.5 0L3 1.8Z" fill="#e0e0e0"/></svg>
<svg class="a" style="left:665.90px;top:487.60px;" width="2.8" height="1.7" viewBox="0 0 3 1.8"><path d="M0 0L1.5 1.8L3 0Z" fill="#e0e0e0"/></svg>
<div class="a" style="left:0.00px;top:491.00px;width:670.20px;height:11.00px;background:#282828;"></div>
<div class="a" style="left:0.00px;top:490.80px;width:670.20px;height:0.45px;background:#454545;"></div>
<div class="a" style="left:0.00px;top:491.20px;width:8.50px;height:10.80px;background:#333333;"></div>
<svg class="a" style="left:2.80px;top:495.10px;" width="2.4" height="3" viewBox="0 0 2.4 3"><path d="M2.4 0V3L0 1.5Z" fill="#e0e0e0"/></svg>
<div class="a t" style="letter-spacing:0.013px;left:8.60px;top:494px;font-size:4.95px;color:#a8c7fa;">s.customize-support.sticky-menu.svg</div>
<div class="a t" style="letter-spacing:0.072px;left:95.20px;top:494px;font-size:4.95px;color:#a8c7fa;"><span style="color:#7cacf8">div</span><span style="color:#a8c7fa">#wpwrap</span></div>
<div class="a t" style="letter-spacing:0.009px;left:128.30px;top:494px;font-size:4.95px;color:#a8c7fa;"><span style="color:#7cacf8">div</span><span style="color:#a8c7fa">#wpcontent</span></div>
<div class="a t" style="letter-spacing:0.002px;left:164.90px;top:494px;font-size:4.95px;color:#a8c7fa;"><span style="color:#7cacf8">div</span><span style="color:#a8c7fa">#wpbody</span></div>
<div class="a t" style="letter-spacing:-0.068px;left:196.30px;top:494px;font-size:4.95px;color:#a8c7fa;"><span style="color:#7cacf8">div</span><span style="color:#a8c7fa">#wpbody-content</span></div>
<div class="a t" style="letter-spacing:0.157px;left:244.40px;top:494px;font-size:4.95px;color:#a8c7fa;"><span style="color:#7cacf8">div</span><span style="color:#a8c7fa">#swpsmtp-mail.wrap</span></div>
<div class="a t" style="letter-spacing:0.028px;left:305.00px;top:494px;font-size:4.95px;color:#a8c7fa;"><span style="color:#7cacf8">div</span><span style="color:#a8c7fa">#poststuff</span></div>
<div class="a t" style="letter-spacing:0.019px;left:338.50px;top:494px;font-size:4.95px;color:#a8c7fa;"><span style="color:#7cacf8">div</span><span style="color:#a8c7fa">#post-body</span></div>
<div class="a t" style="letter-spacing:-0.048px;left:375.90px;top:494px;font-size:4.95px;color:#a8c7fa;"><span style="color:#7cacf8">div</span><span style="color:#a8c7fa">.postbox</span></div>
<div class="a t" style="letter-spacing:-0.043px;left:405.20px;top:494px;font-size:4.95px;color:#a8c7fa;"><span style="color:#7cacf8">div</span><span style="color:#a8c7fa">.inside</span></div>
<div class="a t" style="letter-spacing:-0.007px;left:430.70px;top:494px;font-size:4.95px;color:#a8c7fa;"><span style="color:#7cacf8">form</span><span style="color:#a8c7fa">#swpsmtp_settings_form</span></div>
<div class="a t" style="letter-spacing:0.117px;left:500.80px;top:494px;font-size:4.95px;color:#a8c7fa;"><span style="color:#7cacf8">table</span><span style="color:#a8c7fa">.form-table</span></div>
<div class="a t" style="letter-spacing:0.061px;left:541.60px;top:494px;font-size:4.95px;color:#a8c7fa;"><span style="color:#7cacf8">tbody</span></div>
<div class="a t" style="letter-spacing:0.010px;left:559.50px;top:494px;font-size:4.95px;color:#a8c7fa;"><span style="color:#7cacf8">tr</span><span style="color:#a8c7fa">.ad_opt.swpsmtp_smtp_options</span></div>
<div class="a t" style="letter-spacing:0.138px;left:636.80px;top:494px;font-size:4.95px;color:#a8c7fa;"><span style="color:#7cacf8">td</span></div>
<div class="a" style="left:645.30px;top:491.20px;width:15.00px;height:10.80px;background:#0b4f7e;"></div>
<div class="a t" style="letter-spacing:-0.144px;left:648.20px;top:494px;font-size:4.95px;color:#c8defa;">input</div>
<div class="a" style="left:662.40px;top:491.20px;width:7.80px;height:10.80px;background:#333333;"></div>
<svg class="a" style="left:665.40px;top:495.30px;" width="2" height="2.6" viewBox="0 0 2.4 3"><path d="M0 0V3L2.4 1.5Z" fill="#bdbdbd"/></svg>
<div class="a" style="left:670.20px;top:392.90px;width:129.80px;height:109.10px;background:#282828;"></div>
<div class="a" style="left:670.00px;top:392.90px;width:0.45px;height:109.10px;background:#4a4a4a;"></div>
<div class="a" style="left:670.40px;top:392.90px;width:129.60px;height:10.90px;background:#3a3a3a;"></div>
<div class="a" style="left:670.40px;top:403.60px;width:129.60px;height:0.40px;background:#4d4d4d;"></div>
<div class="a t" style="letter-spacing:-0.006px;left:674.00px;top:396px;font-size:4.75px;color:#8ab4f8;">Styles</div>
<div class="a t" style="letter-spacing:-0.003px;left:695.00px;top:396px;font-size:4.75px;color:#c4c7c5;">Computed</div>
<div class="a t" style="letter-spacing:-0.044px;left:725.00px;top:396px;font-size:4.75px;color:#c4c7c5;">Layout</div>
<div class="a t" style="letter-spacing:-0.043px;left:746.90px;top:396px;font-size:4.75px;color:#c4c7c5;">Event Listeners</div>
<div class="a" style="left:670.50px;top:403.00px;width:20.50px;height:0.95px;background:#7aa7ee;"></div>
<div class="a t" style="left:784.40px;top:393px;font-size:8.6px;color:#c4c7c5;">»</div>
<div class="a" style="left:672.50px;top:405.00px;width:54.80px;height:8.00px;background:#282828;border:1px solid #585858;border-radius:1.2px;box-sizing:border-box;"></div>
<div class="a t" style="letter-spacing:0.156px;left:674.40px;top:407px;font-size:4.75px;color:#7f7f7f;">Filter</div>
<div class="a t m" style="letter-spacing:-0.259px;left:731.90px;top:407px;font-size:4.33px;color:#d0d0d0;font-weight:700;">:hov</div>
<div class="a t m" style="letter-spacing:-0.109px;left:746.00px;top:407px;font-size:4.33px;color:#d0d0d0;font-weight:700;">.cls</div>
<svg class="a" style="left:762.20px;top:407.00px;" width="5.2" height="5.2" viewBox="0 0 10 10"><path d="M4.4 0.8V8M0.8 4.4H8" stroke="#c4c7c5" stroke-width="1.3"/><path d="M9.6 7.4V9.6H7.4Z" fill="#c4c7c5"/></svg>
<svg class="a" style="left:771.80px;top:406.50px;" width="5.6" height="6" viewBox="0 0 10 11"><rect x="0.6" y="0.6" width="8.8" height="3.6" rx="0.6" fill="#c4c7c5"/><path d="M5 4.2V6.2" stroke="#c4c7c5" stroke-width="1"/><rect x="3.6" y="6" width="2.8" height="4.4" fill="#c4c7c5"/></svg>
<svg class="a" style="left:783.40px;top:406.90px;" width="5.6" height="5.2" viewBox="0 0 10 9.4"><rect x="0.7" y="0.7" width="8.6" height="8" fill="none" stroke="#c4c7c5" stroke-width="1.3"/><rect x="2.4" y="2.6" width="2.2" height="4.2" fill="#c4c7c5"/></svg>
<div class="a" style="left:670.40px;top:414.25px;width:123.60px;height:0.40px;background:#3e3e3e;"></div>
<div class="a t m" style="left:672.25px;top:416px;font-size:4.33px;color:#e3e3e3;"><span style="color:#989da2">element.style</span> {</div>
<div class="a t m" style="left:672.25px;top:423px;font-size:4.33px;color:#e3e3e3;">}</div>
<div class="a" style="left:670.40px;top:429.60px;width:123.60px;height:0.40px;background:#3e3e3e;"></div>
<div class="a t m" style="letter-spacing:-0.001px;left:672.25px;top:432px;font-size:4.33px;color:#989da2;">#swpsmtp_settings_form</div>
<div class="a t m" style="letter-spacing:-0.021px;left:737.90px;top:432px;font-size:4.33px;color:#c8c8c8;text-decoration:underline;text-decoration-color:rgba(200,200,200,.55);text-underline-offset:0.6px;">style.css?ver=4.7.3:4</div>
<div class="a t m" style="letter-spacing:0.019px;left:672.25px;top:438px;font-size:4.33px;color:#e3e3e3;"><span style="color:#989da2">input[type='text'], </span>input[type='password'] {</div>
<div class="a t m" style="left:678.90px;top:444px;font-size:4.33px;color:#e3e3e3;"><span style="color:#5cd5fb">width</span>: 350px;</div>
<div class="a t m" style="left:672.25px;top:450px;font-size:4.33px;color:#e3e3e3;">}</div>
<div class="a" style="left:670.40px;top:457.60px;width:123.60px;height:0.40px;background:#3e3e3e;"></div>
<div class="a t m" style="left:672.25px;top:459px;font-size:4.33px;color:#989da2;">input[type=text],</div>
<div class="a t m" style="letter-spacing:0.011px;left:732.00px;top:459px;font-size:4.33px;color:#c8c8c8;text-decoration:underline;text-decoration-color:rgba(200,200,200,.55);text-underline-offset:0.6px;">load-styles…er=4.7.3:11</div>
<div class="a t m" style="left:672.25px;top:465px;font-size:4.33px;color:#989da2;">input[type=search], input[type=radio],</div>
<div class="a t m" style="left:672.25px;top:471px;font-size:4.33px;color:#989da2;">input[type=tel], input[type=time],</div>
<div class="a t m" style="left:672.25px;top:477px;font-size:4.33px;color:#989da2;">input[type=url], input[type=week],</div>
<div class="a t m" style="left:672.25px;top:483px;font-size:4.33px;color:#989da2;"><span style="color:#ececec">input[type=password]</span>, input[type=checkbox],</div>
<div class="a t m" style="left:672.25px;top:488px;font-size:4.33px;color:#989da2;">input[type=color], input[type=date],</div>
<div class="a t m" style="left:672.25px;top:495px;font-size:4.33px;color:#989da2;">input[type=datetime], input[type=datetime-</div>
<div class="a" style="left:794.00px;top:404.00px;width:4.60px;height:98.00px;background:#3f3f3f;"></div>
<div class="a" style="left:794.40px;top:409.90px;width:3.80px;height:11.90px;background:#6b6b6b;"></div>
<svg class="a" style="left:794.90px;top:406.20px;" width="2.8" height="1.7" viewBox="0 0 3 1.8"><path d="M0 1.8L1.5 0L3 1.8Z" fill="#e0e0e0"/></svg>
<svg class="a" style="left:794.90px;top:497.20px;" width="2.8" height="1.7" viewBox="0 0 3 1.8"><path d="M0 0L1.5 1.8L3 0Z" fill="#e0e0e0"/></svg>
<div class="a" style="left:798.60px;top:0.00px;width:1.40px;height:502.00px;background:#1b1c1e;"></div>
</div>
</body></html>
